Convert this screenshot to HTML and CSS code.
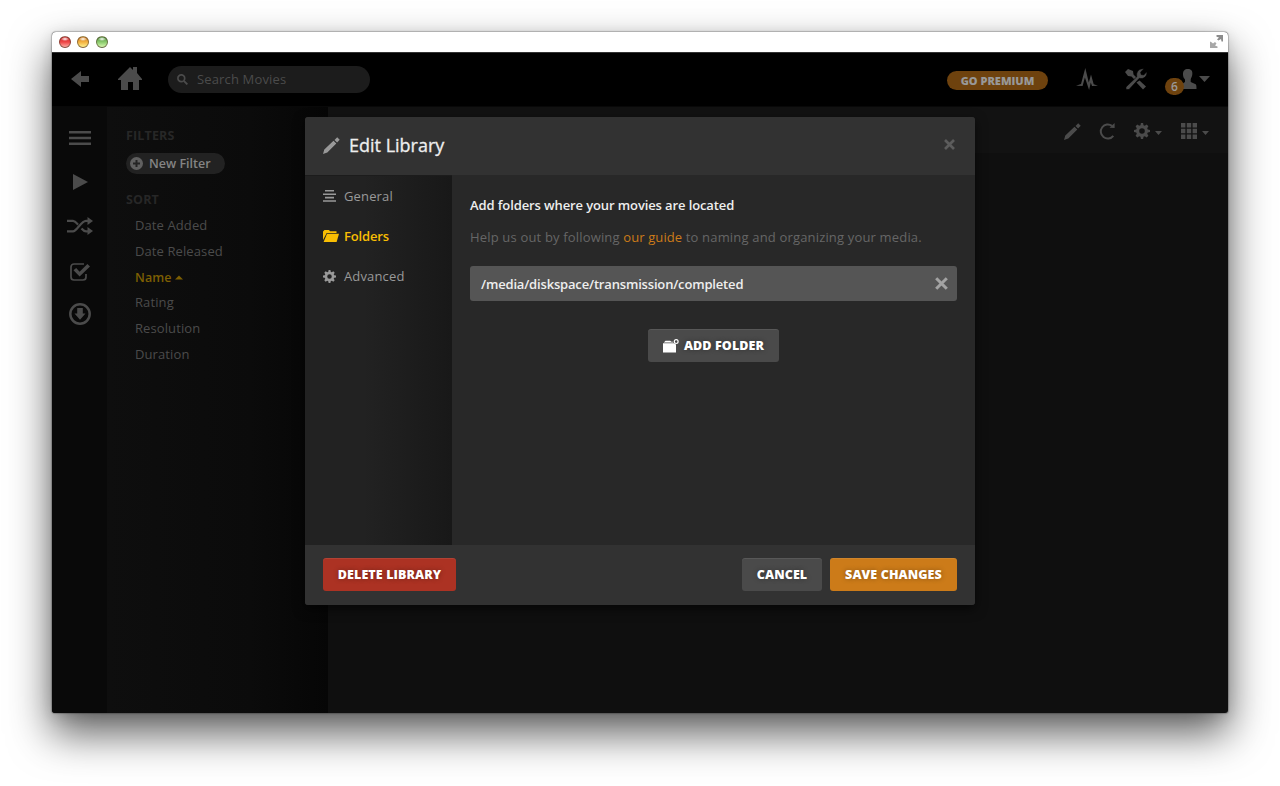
FILE: index.html
```html
<!DOCTYPE html>
<html lang="en">
<head>
<meta charset="utf-8">
<title>Edit Library</title>
<link rel="stylesheet" href="styles.css">
</head>
<body>
<div class="window">
  <div class="titlebar">
    <span class="light red"></span><span class="light amber"></span><span class="light green"></span>
    <svg class="expand" width="14" height="14" viewBox="0 0 14 14" fill="#8b8b8b"><path d="M6.500 0H13v6.500h-1.500L11 4 8.500 5.500 7 4.500 9 2.500l-2.500-.7z"/><path d="M0 6.500l1.500.7L3 8.500 5 7l1.500 1.500L5 10.500l2.500 1V13H0z" opacity=".75"/></svg>
  </div>
  <header class="navbar">
    <svg class="back" width="18" height="16" viewBox="0 0 18 16"><path d="M0 8L10 0v5h8v6h-8v5z"/></svg>
    <svg class="home" width="24" height="23" viewBox="0 0 24 23"><path d="M12 0l3 3V0h4v6l5 6v1h-3v10h-6v-8h-5v8H3V13H0v-1z"/></svg>
    <div class="search">
      <svg width="11" height="11" viewBox="0 0 11 11"><circle cx="4.300" cy="4.300" r="3.400" fill="none" stroke="#4b4b4b" stroke-width="1.700"/><path d="M6.800 6.800l3.600 3.600" stroke="#4b4b4b" stroke-width="1.900"/></svg>
      <span>Search Movies</span>
    </div>
    <span class="premium">GO PREMIUM</span>
    <svg class="pulse" width="22" height="22" viewBox="0 0 22 22"><path d="M0 17.800l5-1.800L9.300 0l3.500 14.500L15 6.500l2.700 9.800L22 17.800l-6 .2-1.200-3.500-1.700 7.500-4.200-12.500L6.600 18z"/></svg>
    <svg class="tools" width="22" height="22" viewBox="0 0 22 22"><path d="M0 4l3-3 5 2 .5 3.500 3 3-2 2-3-3L3 8z"/><path d="M11.500 14.500l3-2 6.500 6-3 3z"/><path d="M1 19L11.800 8.700C10.800 4 14.200 0 19 .8L15.700 4l.4 2.500 2.600.5 3.100-3.300c.7 4.500-2.900 7.800-7.500 6.600L4 21.500H1z" stroke="#000" stroke-width=".6"/></svg>
    <div class="user">
      <svg width="18" height="21" viewBox="0 0 18 21"><path d="M9 0c3.500 0 4.800 2.400 4.300 5.500-.2 2.300-1.300 3.200-1.600 5V13l5 2.200c.8.500.8 3 .8 4.800H0v-3l6-4v-2.500C4.600 9 4 7.500 4 5c0-3 1.500-5 5-5z"/></svg>
      <span class="badge">6</span>
    </div>
    <svg class="user-caret" width="11" height="6" viewBox="0 0 11 6"><path d="M0 0h11L5.500 6z"/></svg>
  </header>
  <div class="main">
    <nav class="rail">
      <span><svg width="22" height="14" viewBox="0 0 22 14"><path d="M0 0h22v2.500H0zM0 5.700h22v2.600H0zM0 11.500h22V14H0z"/></svg></span>
      <span class="play"><svg width="15" height="16" viewBox="0 0 15 16"><path d="M0 0l15 8-15 8z"/></svg></span>
      <span><svg width="26" height="18" viewBox="0 0 26 18"><g fill="none" stroke="#4b4b4b" stroke-width="2.200"><path d="M0 3.800h6c2.500 0 3.800 2.500 5 4M14.500 11.500c1.500 1.800 2.500 2.800 4.500 2.800h3"/><path d="M0 14.300h6c4 0 8-10.500 13-10.500h3"/></g><path d="M20.500 0l5.500 4-5.500 4zM20.500 10l5.500 4-5.500 4z"/></svg></span>
      <span class="check"><svg width="20" height="18" viewBox="0 0 20 18"><path d="M14 1H4a3 3 0 0 0-3 3v10a3 3 0 0 0 3 3h9a3 3 0 0 0 3-3v-3" fill="none" stroke="#4b4b4b" stroke-width="1.700"/><path d="M3.500 7.200L6.200 5 9.600 8.700 17.400 1 20 3.600l-10.400 10z"/></svg></span>
      <span><svg width="22" height="22" viewBox="0 0 22 22"><circle cx="11" cy="11" r="9.700" fill="none" stroke="#4b4b4b" stroke-width="2.500"/><path d="M8.200 5h5.600v5.500h2.700L11 16.800l-5.500-6.300h2.700z"/></svg></span>
    </nav>
    <aside class="filters">
      <h2>FILTERS</h2>
      <div class="new-filter"><svg width="13" height="13" viewBox="0 0 13 13"><circle cx="6.500" cy="6.500" r="6.500" fill="#606060"/><path d="M6.500 3v7M3 6.500h7" stroke="#242424" stroke-width="2"/></svg><span>New Filter</span></div>
      <h2 class="sort">SORT</h2>
      <ul>
        <li>Date Added</li><li>Date Released</li>
        <li class="current">Name<svg width="8" height="5" viewBox="0 0 8 5"><path d="M0 4.500h8L4 .5z"/></svg></li>
        <li>Rating</li><li>Resolution</li><li>Duration</li>
      </ul>
    </aside>
    <section class="content">
      <div class="toolbar">
        <svg class="edit" width="17" height="17" viewBox="0 0 17 17"><path d="M0 17l1.300-4.500L10.500 3.700l2.800 2.800-9 9zM11.500 2.900L14.200.300l2.500 2.500-2.600 2.700z"/></svg>
        <svg class="refresh" width="17" height="18" viewBox="0 0 17 18"><path d="M13 3.900A7 7 0 1 0 14.300 13.800" fill="none" stroke="#4b4b4b" stroke-width="2"/><path d="M10.500 5.800L15.600 1v5z"/></svg>
        <svg class="gear" width="16" height="16" viewBox="0 0 16 16"><path fill-rule="evenodd" d="M6.900 0h2.200l.4 2.200 1.300.6L12.700 1.600l1.700 1.700-1.200 1.900.6 1.300 2.200.4v2.200l-2.200.4-.6 1.300 1.200 1.900-1.700 1.700-1.900-1.200-1.300.6L9.100 16H6.900l-.4-2.200-1.300-.6-1.900 1.200-1.700-1.700 1.200-1.900-.6-1.300L0 9.100V6.900l2.200-.4.6-1.300-1.200-1.900 1.700-1.700 1.900 1.200 1.300-.6zM8 5.200a2.800 2.800 0 1 0 0 5.600 2.800 2.800 0 0 0 0-5.600z"/></svg>
        <svg class="caret" width="7" height="4" viewBox="0 0 7 4"><path d="M0 0h7L3.500 4z"/></svg>
        <svg class="grid" width="16" height="16" viewBox="0 0 16 16"><path d="M0 0h4.400v4.400H0zM5.800 0h4.400v4.400H5.800zM11.600 0H16v4.400h-4.400zM0 5.800h4.400v4.400H0zM5.800 5.800h4.400v4.400H5.800zM11.600 5.800H16v4.400h-4.400zM0 11.600h4.400V16H0zM5.800 11.600h4.400V16H5.800zM11.600 11.600H16V16h-4.400z"/></svg>
        <svg class="caret" width="7" height="4" viewBox="0 0 7 4"><path d="M0 0h7L3.500 4z"/></svg>
      </div>
    </section>
  </div>
</div>

<div class="modal">
  <div class="modal-header">
    <svg width="17" height="17" viewBox="0 0 17 17" fill="#999"><path d="M0 17l1.300-4.500L10.500 3.700l2.800 2.800-9 9zM11.500 2.900L14.200.300l2.500 2.500-2.600 2.700z"/></svg>
    <h1>Edit Library</h1>
    <svg class="close" width="11" height="11" viewBox="0 0 11 11"><path d="M1 1l9 9M10 1l-9 9" stroke="#5c5c5c" stroke-width="2.700"/></svg>
  </div>
  <div class="modal-body">
    <div class="tabs">
      <div class="tab"><svg width="16" height="12" viewBox="0 0 13 12" fill="#999" preserveAspectRatio="xMinYMid"><path d="M2 0h9v1.600H2zM0 3.400h13V5H0zM2 6.800h9v1.600H2zM0 10.200h13v1.600H0z"/></svg><span>General</span></div>
      <div class="tab active"><svg width="16" height="12" viewBox="0 0 16 12" fill="#f9be03"><path d="M0 10V1.500L1.500 0H6l1 1.200h6.500V3H3.700z"/><path d="M.6 12L4 3.800H16L13.600 12z"/></svg><span>Folders</span></div>
      <div class="tab"><svg width="16" height="13" viewBox="0 0 16 16" fill="#999" preserveAspectRatio="xMinYMid"><path fill-rule="evenodd" d="M6.900 0h2.200l.4 2.200 1.300.6L12.700 1.600l1.700 1.700-1.200 1.900.6 1.300 2.200.4v2.200l-2.200.4-.6 1.300 1.200 1.900-1.700 1.700-1.900-1.200-1.300.6L9.100 16H6.900l-.4-2.200-1.300-.6-1.900 1.200-1.700-1.700 1.200-1.900-.6-1.300L0 9.100V6.900l2.200-.4.6-1.300-1.200-1.900 1.700-1.700 1.900 1.200 1.300-.6zM8 5.200a2.800 2.800 0 1 0 0 5.600 2.800 2.800 0 0 0 0-5.600z"/></svg><span>Advanced</span></div>
    </div>
    <div class="pane">
      <p class="lead"><span>Add folders where your movies are located</span></p>
      <p class="help"><span>Help us out by following <a>our guide</a> to naming and organizing your media.</span></p>
      <div class="path"><span>/media/diskspace/transmission/completed</span><svg width="13" height="13" viewBox="0 0 13 13"><path d="M1.200 1.200l10.600 10.600M11.800 1.200L1.200 11.800" stroke="#a3a3a3" stroke-width="3"/></svg></div>
      <div class="btn add"><svg width="16" height="14" viewBox="0 0 16 14" fill="#fff"><path d="M0 13.500V4.200h11l2 1.300v8zM.8 3.500L2.500 1.800h4.700l1.200 1h1.900v.7z"/><circle cx="13.200" cy="2.600" r="1.900" fill="none" stroke="#fff" stroke-width="1.200"/></svg><span>ADD FOLDER</span></div>
    </div>
  </div>
  <div class="modal-footer">
    <div class="btn delete"><span>DELETE LIBRARY</span></div>
    <div class="btn cancel"><span>CANCEL</span></div>
    <div class="btn save"><span>SAVE CHANGES</span></div>
  </div>
</div>
</body>
</html>
```
FILE: styles.css
```css
* { box-sizing: border-box; }
body { margin: 0; height: 786px; padding: 32px 52px 0; background: #fff; overflow: hidden; font: 13px/20px "Open Sans", sans-serif; position: relative; }
svg { display: block; flex: none; }
h1, h2, p, ul { margin: 0; padding: 0; }
span, li { white-space: nowrap; }
.window { width: 1176px; height: 681px; display: flex; flex-direction: column; border-radius: 4px 4px 3px 3px; background: #0f0f0f; box-shadow: 0 0 1px 1px rgba(0,0,0,.22), 0 3px 14px rgba(0,0,0,.12), 0 20px 42px 1px rgba(0,0,0,.62); overflow: hidden; fill: #4b4b4b; }
.titlebar { height: 20px; flex: none; display: flex; align-items: center; padding: 0 4px 0 7px; background: #fff; }
.light { width: 12px; height: 12px; margin-right: 6.400px; border-radius: 50%; border: 1px solid rgba(70,50,30,.55); }
.red { background: radial-gradient(ellipse 4px 2px at 50% 20%, #fff, transparent), linear-gradient(#c33, #ee4545 50%, #ffaaa2); }
.amber { background: radial-gradient(ellipse 4px 2px at 50% 20%, #fff, transparent), linear-gradient(#c87c29, #f4b13f 50%, #fff08e); }
.green { background: radial-gradient(ellipse 4px 2px at 50% 20%, #fff, transparent), linear-gradient(#528c3d, #89ca6c 50%, #d6f9b0); }
.expand { margin-left: auto; }
.navbar { height: 55px; flex: none; display: flex; align-items: center; padding: 0 18px 1px 19px; background: #000; border-top: 1px solid #333; border-bottom: 1px solid #080808; }
.home { margin: -1px 26px 0 29px; }
.search { width: 202px; height: 27px; border-radius: 14px; background: #1c1c1c; color: #4b4b4b; display: flex; align-items: center; padding-left: 9px; gap: 9px; letter-spacing: .15px; }
.premium { margin-left: auto; width: 101px; height: 19px; border-radius: 10px; background: #6e420e; color: #989898; font-size: 11px; font-weight: 800; line-height: 19px; text-align: center; margin-top: 2px; }
.pulse { margin-left: 28px; }
.tools { margin-left: 27px; }
.user { position: relative; margin-left: 32px; }
.badge { position: absolute; left: -14px; top: 9px; width: 19px; height: 17px; border-radius: 9px; background: #6e420e; color: #999; font-size: 12px; font-weight: 600; line-height: 17px; text-align: center; }
.user-caret { margin: -1px 0 0 2px; }
.main { flex: 1; display: flex; min-height: 0; }
.rail { width: 55px; padding-top: 9px; background: #090909; }
.rail span { height: 44px; display: flex; align-items: center; justify-content: center; }
.rail .check { padding-top: 4px; }
.rail .play { padding-left: 2px; }
.filters { width: 221px; padding: 19px 0 0 19px; background: linear-gradient(90deg, #0e0e0e, #0b0b0b 65%, #060606); color: #4b4b4b; }
.filters h2 { font-size: 12.500px; font-weight: 700; line-height: 20px; color: #272727; letter-spacing: .15px; }
.new-filter { width: 99px; height: 21px; margin-top: 7px; border-radius: 11px; background: #222; color: #848484; font-weight: 600; display: flex; align-items: center; padding-left: 4px; gap: 6px; font-size: 12.500px; }
.filters .sort { margin: 16px 0 3.300px; }
.filters li { height: 25.700px; line-height: 25.700px; padding-left: 9px; list-style: none; display: flex; align-items: center; font-size: 13px; letter-spacing: .1px; }
.filters .current { color: #7d5f02; fill: #7d5f02; font-size: 12.500px; font-weight: 600; gap: 3px; }
.content { flex: 1; }
.toolbar { height: 46px; display: flex; align-items: center; justify-content: flex-end; padding: 2px 19px 0 0; background: #121212; }
.refresh { margin-left: 18px; }
.gear { margin-left: 18px; }
.caret { margin: 4px 0 0 5px; }
.grid { margin-left: 19px; }
.modal { position: absolute; left: 305px; top: 117px; width: 670px; height: 488px; border-radius: 3px; background: #282828; box-shadow: 0 4px 12px rgba(0,0,0,.6); overflow: hidden; }
.modal-header { height: 58px; display: flex; align-items: center; padding: 0 20px 2px 18px; background: #323232; }
.modal-header h1 { margin-left: 9px; font-size: 18px; font-weight: 400; color: #eee; -webkit-text-stroke: .3px #eee; }
.close { margin: -1px 0 0 auto; }
.modal-body { height: 370px; display: flex; }
.tabs { width: 147px; padding: 0 0 0 18px; background: linear-gradient(90deg, #222 40%, #181818); border-top: 1px solid #1c1c1c; }
.tab { height: 40.200px; display: flex; align-items: center; gap: 5px; color: #999; letter-spacing: .15px; }
.tab.active { color: #f9be03; font-weight: 600; letter-spacing: -.15px; }
.pane { flex: 1; padding: 20px 18px 0; }
.lead { color: #eee; font-weight: 600; letter-spacing: -.11px; }
.help { margin-top: 12px; color: #666; letter-spacing: .17px; }
.help a { color: #cc7b19; font-weight: 500; letter-spacing: .1px; }
.path { height: 35px; margin-top: 19px; border-radius: 3px; background: #555; color: #eee; font-weight: 600; letter-spacing: -.17px; display: flex; align-items: center; justify-content: space-between; padding: 0 9px 0 11px; }
.btn { height: 33px; border-radius: 3px; display: flex; align-items: center; justify-content: center; color: #fff; font-size: 12.500px; font-weight: 800; letter-spacing: .1px; background: #4a4a4a; box-shadow: inset 0 1px 0 rgba(255,255,255,.08); text-shadow: 0 0 5px rgba(0,0,0,.35); }
.add { width: 131px; margin: 28px auto 0; gap: 5px; }
.modal-footer { height: 60px; display: flex; align-items: center; padding: 0 18px 1px; gap: 8px; background: #323232; }
.delete { width: 133px; margin-right: auto; background: #ac3223; }
.cancel { width: 80px; }
.save { width: 127px; background: #cc7b19; }
```
